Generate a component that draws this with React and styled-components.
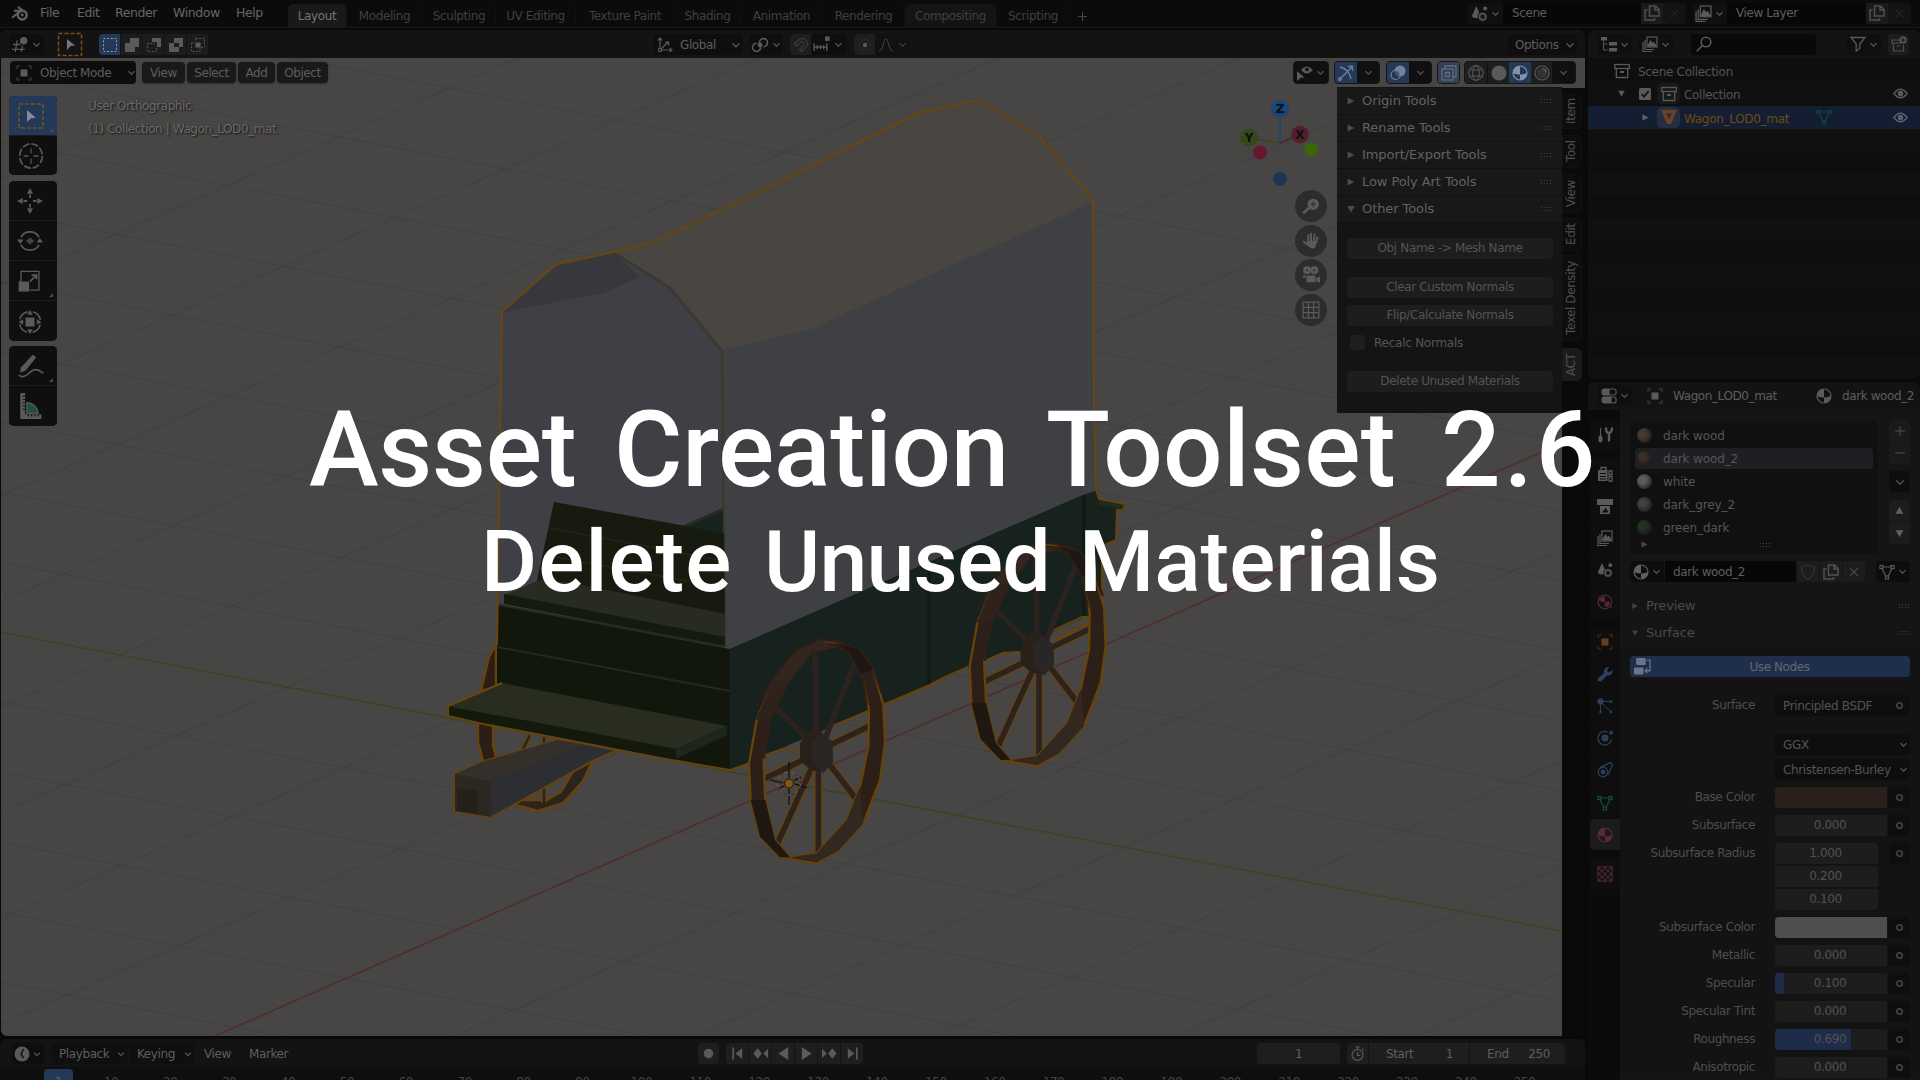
import React from "react";
import styled, { createGlobalStyle, css } from "styled-components";

const Global = createGlobalStyle`
  * { box-sizing: border-box; }
  body { margin: 0; background: #0a0a0a; overflow: hidden; }
`;

const C = {
  text: "#5e5e5e", icon: "#5a5a5a", bar: "#131313", btn: "#1e1e1e", blue: "#243858",
};

/* ---------- icons ---------- */
const chevron = <path d="M3.5 6l4.5 4.5L12.5 6" fill="none" stroke="currentColor" strokeWidth="1.7" />;
const shapes = {
  chevron,
  blender: <g fill="none" stroke="currentColor"><circle cx="10" cy="9.8" r="3.9" strokeWidth="2.2" /><circle cx="10" cy="9.8" r="1.3" fill="currentColor" stroke="none" /><path d="M1 12.2L8.4 6H2.6M6.2 2.5l5 3.8" strokeWidth="1.9" /></g>,
  grid3d: <g fill="none" stroke="currentColor"><path d="M1 8h7M0 12.5h12M5 4L3 15M10 9L8.5 15" strokeWidth="1.2" /><circle cx="11" cy="4.5" r="3.5" fill="currentColor" stroke="none" /></g>,
  selNew: <rect x="1.5" y="1.5" width="13" height="13" fill="none" stroke="#8a9ab4" strokeDasharray="2 1.7" />,
  selAdd: <path d="M6 1h9v9h-4v5H1V6h5z" fill="currentColor" />,
  selSub: <g><path d="M6 1h9v9h-4V5H6z" fill="currentColor" /><path d="M1.5 6v8.500h9V11M1.500 6.500H9" fill="none" stroke="currentColor" strokeDasharray="1.700 1.500" /></g>,
  selDiff: <path fillRule="evenodd" d="M6 1h9v9h-4v5H1V6h5zM6 6v4h5V6z" fill="currentColor" />,
  selAnd: <g><rect x="5.500" y="5.500" width="5" height="5" fill="currentColor" /><path d="M1.500 6v8.500H10V11M6 1.500h8.500V10M6 1.500V5M1.500 6H5M11 10.500h3" fill="none" stroke="currentColor" strokeDasharray="1.700 1.500" /></g>,
  axes: <g fill="none" stroke="currentColor" strokeWidth="1.200"><path d="M3 1v12h12M3 13l8-8M1 3.500L3 1l2 2.500M12.500 11l2.500 2-2.500 2M8 5h3.500v3.500" /><circle cx="3" cy="13" r="1.700" fill="#131313" /></g>,
  pivot: <g fill="none" stroke="currentColor" strokeWidth="1.400"><path d="M7.500 6A3.600 3.600 0 1 1 11 9.500M8.500 10A3.600 3.600 0 1 1 5 6.500" /><circle cx="8" cy="8" r="1.500" fill="currentColor" /></g>,
  magnet: <path d="M1.500 6.500L6.500 2.500a5 5 0 0 1 6.500 7.500l-4.500 4.500-2-2 4.300-4.500a2.200 2.200 0 0 0-3-3L3.500 9z" fill="none" stroke="currentColor" strokeWidth="1.200" />,
  increment: <g fill="none" stroke="currentColor" strokeWidth="1.300"><path d="M1 7v7M4 8.500v4M7 8.500v4M10 8.500v4M13 7v7M1 10.500h12" /><rect x="12" y="1" width="3" height="3" fill="currentColor" /></g>,
  prop: <g><circle cx="8" cy="8" r="5.500" fill="none" stroke="#2c2c2c" strokeWidth="1" /><circle cx="8" cy="8" r="2.200" fill="currentColor" /></g>,
  bell: <path d="M1 14c5 0 4-12 7-12s2 12 7 12" fill="none" stroke="currentColor" strokeWidth="1.200" />,
  objMode: <g><rect x="4.500" y="4.500" width="7" height="7" fill="currentColor" /><path d="M1 4V1h3M12 1h3v3M15 12v3h-3M4 15H1v-3" fill="none" stroke="currentColor" strokeWidth="1" opacity=".7" /></g>,
  scene: <g fill="currentColor"><path d="M5 1l4.200 9.500a4.500 3 0 0 1-8.400 0z" /><circle cx="13.300" cy="3.200" r="1.900" /><circle cx="11" cy="11" r="4.300" stroke="#131313" /><circle cx="11" cy="11" r="2.300" fill="#1a1a1a" /></g>,
  layers: <g fill="none" stroke="currentColor" strokeWidth="1.200"><rect x="5" y="1" width="10" height="10" /><path d="M3 4v9.500h9M1 6v9.500h9" /><path d="M6 10l2.500-5 2 3 1.200-1.500L14 10z" fill="currentColor" /></g>,
  copy: <g fill="none" stroke="currentColor" strokeWidth="1.500"><path d="M5.500 1h6L15 4.500V11H5.500zM11 1v4h4" /><path d="M3.500 5H1v10h9.500v-2" /></g>,
  x: <path d="M3.500 3.500l9 9M12.500 3.500l-9 9" stroke="currentColor" strokeWidth="1.200" />,
  tree: <g fill="currentColor"><rect x="0" y="1" width="6" height="3.500" /><rect x="8" y="6" width="8" height="3.500" /><rect x="8" y="12" width="8" height="3.500" /><path d="M2.500 5v9h4M2.500 8h4" fill="none" stroke="currentColor" /></g>,
  search: <g fill="none" stroke="currentColor" strokeWidth="1.600"><circle cx="10" cy="6" r="4.800" /><path d="M6.500 9.500L.8 15.200" /></g>,
  filter: <path d="M1 1.500h14L9.800 8v4.500L6.200 15V8z" fill="none" stroke="currentColor" strokeWidth="1.300" />,
  box: <g fill="none" stroke="currentColor" strokeWidth="1.300"><rect x=".8" y="1.500" width="14.400" height="4" /><path d="M2.300 5.500v9h11.400v-9" /><path d="M6 9h4" strokeWidth="2" /></g>,
  boxPlus: <g fill="none" stroke="currentColor" strokeWidth="1.200"><path d="M8 4H1v3h9M2.500 7v8h10V9M6 10h3" /><circle cx="12" cy="4" r="3.800" fill="currentColor" stroke="none" /><path d="M12 2v4M10 4h4" stroke="#1c1c1c" /></g>,
  eye: <g fill="none" stroke="currentColor" strokeWidth="1.600"><path d="M1 8q7-9 14 0-7 9-14 0z" /><circle cx="8" cy="8" r="2.200" fill="currentColor" /></g>,
  mesh: <g fill="none" stroke="currentColor" strokeWidth="1.200"><path d="M3.500 3h9M3 4.500l4 8M13 4.500l-4 8" /><rect x="1" y="1.500" width="3" height="3" /><rect x="12" y="1.500" width="3" height="3" /><rect x="6.500" y="12" width="3" height="3" /></g>,
  meshObj: <path fillRule="evenodd" d="M0 1h16L10 15H6zM5 4.500l3 6 3-6z" fill="currentColor" />,
  check: <g><rect width="16" height="16" rx="2" fill="currentColor" /><path d="M3.500 8l3.200 3.500L13 4" fill="none" stroke="#111" strokeWidth="2.200" /></g>,
  props: <g fill="none" stroke="currentColor" strokeWidth="1.200"><rect x="1" y="1" width="14" height="6" rx="2" /><rect x="1" y="9" width="14" height="6" rx="2" /><path d="M2 1.500h6v5H2zM2 9.500h8v5H2z" fill="currentColor" /></g>,
  material: <g><circle cx="8" cy="8" r="7" fill="none" stroke="currentColor" strokeWidth="1.200" /><path d="M8 1a7 7 0 0 0-7 7c2 1.300 4.500 1.600 7 1.400zM8 9.400V15c4 0 6.800-3 7-7-2 1-4.500 1.500-7 1.400z" fill="currentColor" /></g>,
  tool: <g fill="none" stroke="currentColor"><path d="M3.500 1v8" strokeWidth="1.200" /><path d="M3.500 10.500v3" strokeWidth="4" strokeLinecap="round" /><path d="M9 1.500c0 3 .8 4 2.500 4.500S15 4.500 15 1.500M12 6v7.500" strokeWidth="2.400" strokeLinecap="round" /></g>,
  render: <g fill="currentColor"><path fillRule="evenodd" d="M1 4h9.500v11H1zM3 7v1h6V7zm0 3v1h6v-1zm0 2.500v1h6v-1z" /><path d="M4 4V1.500h5V4M12 5h3v3.500h-3zM12 10.500h3V15h-3z" fill="none" stroke="currentColor" strokeWidth="1.300" /></g>,
  output: <g fill="currentColor"><path d="M0 1h16v6H0z" /><path fillRule="evenodd" d="M3 8h10v8H3zm1.500 6.500h7L9 10z" /></g>,
  world: <g><circle cx="8" cy="8" r="6.800" fill="none" stroke="currentColor" strokeWidth="1.200" /><path d="M2 5c3-3 5-3 6-2s-1 2 0 3-1 3-3 2-3-1-3-3zM9 8c2-1 4-1 4 1s-2 4-4 4-2-4 0-5z" fill="currentColor" /><path d="M1 2l2 2M15 14l-2-2" stroke="currentColor" /></g>,
  wrench: <path d="M1 15l-.5-2.500L7 7c-.5-3 1-6 5-6L10 4.500 12 6.500 15.500 4c.5 4-2.500 6-5.500 5.500L4 15.500z" fill="currentColor" />,
  particles: <g stroke="currentColor" fill="currentColor"><circle cx="3.500" cy="3.500" r="2.800" /><path d="M4 4l9 9M4 3.500h9M3.500 4v9" fill="none" /><circle cx="14" cy="3.500" r="1" /><circle cx="3.500" cy="14" r="1" /><circle cx="14" cy="14" r="1" /></g>,
  physics: <g fill="none" stroke="currentColor" strokeWidth="1.300"><path d="M10.500 2A6.800 6.800 0 1 0 14.500 9" /><circle cx="8" cy="8" r="2.800" fill="currentColor" /><circle cx="14" cy="2.800" r="1.300" fill="currentColor" /></g>,
  constraint: <g fill="none" stroke="currentColor" strokeWidth="1.400"><path d="M3 5.500L12 1.200a2 2 0 0 1 3 2.500L11 13" /><circle cx="6" cy="10" r="4.700" /><circle cx="6" cy="10" r="1.700" fill="currentColor" /></g>,
  checker: <g fill="currentColor"><rect x=".7" y=".7" width="14.600" height="14.600" fill="none" stroke="currentColor" />{[0, 1, 2, 3, 4].flatMap((r) => [0, 1, 2, 3, 4].filter((c) => (r + c) % 2 === 0).map((c) => <rect key={r + "-" + c} x={.5 + c * 3} y={.5 + r * 3} width="3" height="3" />))}</g>,
  shield: <path d="M8 1l6.500 2c0 6-2 10-6.500 12.500C3.500 13 1.500 9 1.500 3z" fill="none" stroke="currentColor" strokeWidth="1.300" />,
  nodes: <g fill="currentColor"><rect x="2" y="0" width="9" height="6.500" rx="1" /><rect x="0" y="9" width="9" height="6.500" rx="1" /><path d="M12 2h3v10h-4M12.500 9.800L10.500 12l2 2.200" fill="none" stroke="currentColor" strokeWidth="1.200" /></g>,
  dot: <circle cx="8" cy="8" r="3" fill="none" stroke="currentColor" strokeWidth="1.700" />,
  plus: <path d="M8 2.500v11M2.500 8h11" stroke="currentColor" strokeWidth="1.200" />,
  minus: <path d="M2.500 8h11" stroke="currentColor" strokeWidth="1.200" />,
  up: <path d="M8 3.500L12.800 12H3.200z" fill="currentColor" />,
  down: <path d="M8 12.500L3.200 4h9.600z" fill="currentColor" />,
  right: <path d="M3.500 3.200L12.500 8l-9 4.800z" fill="currentColor" />,
  clock: <g><circle cx="8" cy="8" r="7.500" fill="currentColor" /><path d="M9.500 3L7 8l2.500 4" fill="none" stroke="#141414" strokeWidth="1.600" /></g>,
  rec: <circle cx="8" cy="8" r="4.500" fill="currentColor" />,
  first: <path d="M2.500 1.500h1.800v13H2.500zM13 2.500v11L6 8z" fill="currentColor" />,
  prevKey: <path d="M5 2.500L9.500 8 5 13.500.5 8zM16 3v10l-5-5z" fill="currentColor" />,
  playBack: <path d="M13 1v14L2.500 8z" fill="currentColor" />,
  play: <path d="M3 1v14l10.500-7z" fill="currentColor" />,
  nextKey: <path d="M11 2.500L15.500 8 11 13.500 6.500 8zM0 3v10l5-5z" fill="currentColor" />,
  last: <path d="M13.500 1.500h-1.800v13h1.800zM3 2.500v11L10 8z" fill="currentColor" />,
  stopwatch: <g fill="none" stroke="currentColor" strokeWidth="1.300"><circle cx="8" cy="9.500" r="5.800" /><path d="M8 6v4h3M6 1h4M8 1v2.500M13 3l1.500 1.500" /></g>,
  eyeArrow: <g><path d="M4 5q5.500-7 12 0-6.500 7-12 0z" fill="currentColor" /><circle cx="10" cy="4.500" r="1.800" fill="#111" /><path d="M0 6l7.500 6.500-4 .3L0 16z" fill="currentColor" /></g>,
  gizmo: <g fill="none" stroke="currentColor" strokeWidth="1.300"><path d="M2 2q9 2 11 12M2 14L14 2M10 1.500h4.500V6" /><circle cx="2" cy="14" r="1.300" /></g>,
  overlay: <g><circle cx="10" cy="6" r="5.500" fill="currentColor" /><circle cx="5.500" cy="10" r="4.500" fill="#20355a" fillOpacity=".6" stroke="currentColor" strokeWidth="1.200" /></g>,
  xray: <g fill="none" stroke="currentColor" strokeWidth="1.300"><rect x="1" y="4" width="11" height="11" /><path d="M4 4V1h11v11h-3M4.500 7.500v4h4v-4z" /></g>,
  wire: <g fill="none" stroke="currentColor"><circle cx="8" cy="8" r="7.300" /><ellipse cx="8" cy="8" rx="3.300" ry="7.300" /><path d="M1.500 5h13M1.500 11h13" /></g>,
  solid: <circle cx="8" cy="8" r="7.500" fill="currentColor" />,
  rendered: <g><circle cx="8" cy="8" r="7" fill="none" stroke="currentColor" strokeWidth="1.200" /><circle cx="8" cy="8" r="5.200" fill="#333" /><path d="M9 3.500a4.500 4.500 0 0 1 3.300 4" fill="none" stroke="#777" /></g>,
  ring: <g fill="none" stroke="#5d5555" strokeWidth="1"><circle cx="8" cy="8" r="6.500" strokeDasharray="4 1.100" /><path d="M8 3.800v2.800M8 9.400v2.800M3.800 8h2.800M9.400 8h2.800" strokeWidth=".7" /></g>,
  move: <g fill="currentColor"><path d="M8 0l1.900 3.500H6.100zM8 16l1.900-3.500H6.100zM0 8l3.500-1.900v3.800zM16 8l-3.500-1.900v3.800z" /><path d="M8 4v2.200M8 9.800V12M4 8h2.200M9.800 8H12" stroke="currentColor" strokeWidth="1.100" /></g>,
  rotate: <g fill="none" stroke="currentColor" strokeWidth="1.100"><path d="M2.500 5.500a6 6 0 0 1 11 0M13.500 10.500a6 6 0 0 1-11 0" /><path d="M0 7h4l-2 3zM12 9h4l-2-3z" fill="currentColor" stroke="none" /><path d="M8 5.500L10.500 8 8 10.500 5.500 8z" fill="currentColor" stroke="none" opacity=".7" /></g>,
  scale: <g fill="none" stroke="currentColor" strokeWidth="1"><path d="M2.500 9V1h11v13H8" strokeWidth=".8" /><rect x="1.500" y="8.500" width="5.500" height="6" fill="currentColor" /><path d="M8 8l3.500-4M9 3.500h3v3" strokeWidth="1.200" /></g>,
  transform: <g fill="currentColor"><rect x="5.200" y="5.200" width="5.600" height="5.600" /><circle cx="8" cy="8" r="6.500" fill="none" stroke="currentColor" strokeDasharray="7 3.200" strokeDashoffset="-1.600" /><path d="M8 .5l1.700 3H6.300zM8 15.500l1.700-3H6.300zM1 8l2.800-1.700v3.400zM15 8l-2.800-1.700v3.400z" /></g>,
  pen: <g><path d="M9 .5l2 1.500L5 10.500 1.800 12l.4-3.300z" fill="currentColor" /><path d="M1 13.500c4 3.500 6-3.500 9.500-3.500 2.500 0 3 1 4.500 2.500" fill="none" stroke="currentColor" strokeWidth="1" /></g>,
  measure: <g><path d="M2 0h3v13h10v3H2z" fill="currentColor" /><path d="M6 6a7 7 0 0 1 7 6.500H6z" fill="#2d4a3e" stroke="#3e5f52" strokeWidth=".8" /><path d="M5 2H3.500M5 4H3.500M5 6H3.500M5 8H3.500M5 10H3.500M7 13v1.500M9 13v1.500M11 13v1.500M13 13v1.500" stroke="#111" strokeWidth=".7" /></g>,
  zoomIn: <g><circle cx="10" cy="6.500" r="5" fill="currentColor" /><path d="M6.500 9.500L1 14.500" stroke="currentColor" strokeWidth="2.400" /><path d="M10 4v5M7.500 6.500h5" stroke="#333" strokeWidth="1.100" /></g>,
  hand: <g fill="none" stroke="currentColor" strokeLinecap="round"><path d="M5.500 8V3M8 7.500V1.500M10.500 8l.7-5.500M12.500 9.500l1.300-4.500M4.500 11L1.500 8.500" strokeWidth="1.800" /><path d="M4.600 8h8.500l-1.500 6.500H7.500L4 11z" fill="currentColor" stroke="none" /></g>,
  camera: <g fill="currentColor"><circle cx="4.500" cy="3.800" r="3.500" /><circle cx="11" cy="3.800" r="3.500" /><circle cx="4.500" cy="3.800" r="1" fill="#2d2c2b" /><circle cx="11" cy="3.800" r="1" fill="#2d2c2b" /><path d="M4 8.500h8v6H4zM12.500 11l3.500-2v6l-3.500-2zM1 8.500h2.500v2H1z" /></g>,
  gridNav: <g fill="none" stroke="currentColor" strokeWidth="1.100"><rect x="1" y="1" width="14" height="14" /><path d="M5.700 1v14M10.300 1v14M1 5.700h14M1 10.300h14" /></g>,
};
shapes.objTab = shapes.objMode;

const Svg = styled.svg`display: block; flex: none; overflow: visible; color: ${(p) => p.$c};`;
const Icon = ({ n, s = 16, h, c = C.icon }) => (
  <Svg viewBox="0 0 16 16" width={s} height={h || s} $c={c} preserveAspectRatio="none">{shapes[n]}</Svg>
);

/* ---------- shared parts ---------- */
const font = css`
  font-family: "DejaVu Sans", "Liberation Sans", sans-serif;
  font-size: 12px; letter-spacing: -0.4px; line-height: 16px; white-space: pre;
`;
const Screen = styled.div`
  ${font} position: relative; width: 1920px; height: 1080px; overflow: hidden;
  background: #090909; color: ${C.text}; display: flex; flex-direction: column;
`;
const Row = styled.div`display: flex; align-items: center; flex: none;`;
const Cell = styled.div`
  display: flex; align-items: center; flex: none;
  justify-content: ${(p) => p.$j || "center"};
  width: ${(p) => (p.$w ? p.$w + "px" : "auto")};
  height: ${(p) => p.$h || 21}px;
  margin-left: ${(p) => p.$ml || 0}px;
  padding: ${(p) => p.$p || "0"};
  gap: ${(p) => p.$gap || 0}px;
  background: ${(p) => p.$bg || "transparent"};
  color: ${(p) => p.$c || C.text};
  border-radius: ${(p) => p.$r ?? "4px"};
`;
const Spacer = styled.div`flex: 1;`;

/* ---------- top bar ---------- */
const TopBar = styled(Row)`height: 28px; padding-left: 11px; border-bottom: 1px solid #191919; align-items: flex-start; background: #0b0b0b;`;
const MenuItem = styled.div`width: ${(p) => p.$w}px; padding-top: 5px; letter-spacing: -0.4px; font-size: 12.5px; color: #666;`;
const Workspace = styled.div`
  width: ${(p) => p.$w}px; height: 24px; margin-top: 4px; padding-top: 4px; text-align: center;
  border-radius: 5px 5px 0 0; color: ${(p) => (p.$on ? "#747474" : "#404040")};
  background: ${(p) => (p.$on ? "#191919" : p.$hover ? "#141414" : "transparent")};
  border-right: 1px solid #0f0f0f; letter-spacing: -0.4px;
`;
const workspaces = [["Layout", 59, 1], ["Modeling", 76], ["Sculpting", 73], ["UV Editing", 80], ["Texture Paint", 99], ["Shading", 66], ["Animation", 82], ["Rendering", 82], ["Compositing", 92, 0, 1], ["Scripting", 73]];

const DataPicker = ({ icon, label, w, ml, iw }) => (
  <Cell $ml={ml} $r="4px">
    <Cell $w={iw} $bg="#101010" $gap={2} $r="4px 0 0 4px"><Icon n={icon} s={17} /><Icon n="chevron" s={11} /></Cell>
    <Cell $w={w} $bg="#070707" $j="flex-start" $p="0 0 0 9px" $r="0">{label}</Cell>
    <Cell $w={22} $bg="#1a1a1a" $r="0"><Icon n="copy" s={16} c="#505050" /></Cell>
    <Cell $w={23} $bg="#131313" $r="0 4px 4px 0"><Icon n="x" s={13} c="#2c2c2c" /></Cell>
  </Cell>
);
const PickerRow = styled(Row)`height: 26px;`;

/* ---------- areas ---------- */
const Body = styled.div`display: flex; flex: 1; min-height: 0; padding-top: 2px;`;
const LeftCol = styled.div`width: 1585px; flex: none; display: flex; flex-direction: column;`;
const RightCol = styled.div`width: 332px; flex: none; margin-left: 3px; display: flex; flex-direction: column;`;
const Header = styled(Row)`height: 28px; background: ${C.bar}; border-radius: 6px 6px 0 0; padding: ${(p) => p.$pt ?? 1}px 0 ${(p) => p.$pb || 0}px ${(p) => p.$pl || 0}px;`;

/* ---------- viewport ---------- */
const Viewport = styled.div`
  height: 978px; flex: none; margin-left: 1px; position: relative; overflow: hidden;
  background: #474644; display: flex; flex-direction: column; border-radius: 0 0 0 6px;
`;
const SceneSvg = styled.svg`position: absolute; left: -1px; top: 0;`;
const VHeader = styled(Row)`position: relative; height: 30px; padding: 0 9px 1px;`;
const HBtn = styled(Cell)`background: #191919; border-radius: 4px; height: 21px; margin-right: 2px; box-shadow: 0 1px 2px #0005;`;
const HGroup = styled(Row)`height: 23px; margin-left: ${(p) => p.$ml || 0}px; border-radius: 4px; overflow: hidden; background: #101010; border: 1px solid #151515;`;
const VBody = styled.div`position: relative; flex: 1; display: flex; min-height: 0;`;
const Toolbar = styled.div`margin: 8px 0 0 8px; width: 48px; display: flex; flex-direction: column; gap: 5.500px;`;
const ToolGroup = styled.div`border-radius: 5px; overflow: hidden; background: #0e0e0e; display: flex; flex-direction: column; gap: 1px;`;
const Tool = styled.div`
  height: 39.200px; background: ${(p) => (p.$on ? C.blue : "#0f0f0f")}; box-shadow: 0 1px 0 #1c1c1c;
  display: flex; align-items: center; padding: 1px 0 0 8px; position: relative;
`;
const Corner = styled.i`position: absolute; right: 4px; bottom: 3px; border-left: 4px solid transparent; border-bottom: 4px solid #4a4a4a;`;
const Stats = styled.div`margin: 7px 0 0 31px; line-height: 23px; color: #6a6a6a; text-shadow: 1px 1px 2px #000c; letter-spacing: -0.42px;`;
const Nav = styled.div`width: 101px;`;
const NavBtns = styled.div`display: flex; flex-direction: column; gap: 2.700px; align-items: flex-end; padding-right: 10px;`;
const NavBtn = styled.div`width: 32px; height: 32px; border-radius: 50%; background: #2d2c2b; display: grid; place-items: center;`;
const NPanel = styled.div`width: 225px; height: 326px; margin-top: -1px; padding-top: 1px; background: #141414; display: flex; flex-direction: column;`;
const PanelHead = styled(Row)`
  height: 27px; padding: 0 10px 0 8px; font-size: 13px; letter-spacing: -0.08px; color: #626262; background: #181818;
  border-bottom: 1px solid #111;
`;
const PanelTitle = styled.span`margin-left: 5px; flex: 1;`;
const Grip = styled.i`width: 12px; height: 6px; background: radial-gradient(circle, #444 0.800px, transparent 1px) 0 0 / 3px 3px;`;
const OpBtn = styled.div`
  height: 21px; margin: ${(p) => p.$mt}px 9px 0 10px; border-radius: 4px; background: #1d1d1d; color: #545454;
  text-align: center; line-height: 21px; letter-spacing: -0.35px;
`;
const CheckRow = styled(Row)`height: 21px; margin: 6px 13px 0; color: #565656; gap: 9px; letter-spacing: -0.25px;`;
const Box = styled.i`width: 15px; height: 15px; border-radius: 3px; background: #1f1f1f;`;
const SideTabs = styled.div`width: 23px; background: #0a0a0a; padding-top: 6px;`;
const SideTab = styled.div`
  width: 20px; height: ${(p) => p.$h}px; margin-bottom: ${(p) => p.$mb}px; border-radius: 5px 0 0 5px;
  background: ${(p) => (p.$on ? "#1b1b1b" : "#0d0d0d")}; border: 1px solid ${(p) => (p.$on ? "#1b1b1b" : "#121212")};
  writing-mode: vertical-rl; transform: rotate(180deg); text-align: center; line-height: 17px; color: #505050;
`;

const Wheel = ({ dx = 0, dy = 0 }) => (
  <g transform={`translate(${720 + dx} ${460 + dy}) scale(.33333)`}>
    <g stroke="#67430b" strokeWidth="25" strokeLinecap="round">
      <path d="M300 870L465 790M270 890L135 955M270 935L175 1145M295 930V1180M330 915L418 1030" />
    </g>
    <g stroke="#2c2321" strokeWidth="17" strokeLinecap="round">
      <path d="M289 860L285 585M310 850L408 600M300 870L465 790M275 850L175 750M270 890L135 955M270 935L175 1145M295 930V1180M330 915L418 1030" />
    </g>
    <path fillRule="evenodd" fill="#2b1f18" stroke="#67430b" strokeWidth="7" strokeLinejoin="round"
      d="M300 542L225 578 160 660 110 780 87 910 92 1020 120 1130 180 1192 290 1210 355 1172 430 1090 480 960 495 850 490 735 460 630 415 570 350 548zM345 560L385 570 425 640 447 750 445 860 420 980 380 1080 290 1180 210 1192 165 1140 136 1020 130 890 150 780 205 665 275 575z" />
    <path d="M136 890L130 890 150 780 205 665 275 575 345 560 385 570 425 640 440 735" fill="none" stroke="#2b1f18" strokeWidth="9" />
    <path d="M110 740L160 655 225 573 300 538 350 544 415 566 460 626 486 700" fill="none" stroke="#2b1f18" strokeWidth="8" />
    <path d="M300 540L225 576 158 660 205 667 275 578 345 562z" fill="#33261f" />
    <path d="M108 780L158 660 205 667 150 780z" fill="#2e221b" />
    <path d="M120 1130L180 1192 210 1192 165 1140 136 1020 92 1020z" fill="#1f1712" />
    <path d="M355 1172L430 1090 420 980 380 1080 290 1180 210 1192 290 1207z" fill="#33281f" />
    <path d="M345 548L415 568 460 630 425 642 385 572z" fill="#1f1613" />
    <path d="M265 812L300 808 320 840 300 935 270 930 240 900 240 850z" fill="#2a201a" />
    <path d="M305 820L338 845 340 905 310 940 280 910 275 850z" fill="#2b2626" />
  </g>
);

const gridLines = [];
for (let k = -9; k <= 7; k++) if (k) {
  const y = 696 + 70 * k;
  gridLines.push(["a" + k, 0, y - 64, 1562, y + 235]);
}
for (let k = -9; k <= 7; k++) if (k) {
  const y = 983 + 105.600 * k;
  gridLines.push(["b" + k, 0, y + 147, 1562, y - 539]);
}

const Scene = () => (
  <SceneSvg width="1585" height="978" viewBox="0 58 1585 978">
    <g stroke="#424044" strokeWidth="1.200">
      {gridLines.map(([k, a, b, c, d]) => <line key={k} x1={a} y1={b} x2={c} y2={d} />)}
    </g>
    <path d="M0 632L1562 931" stroke="#3a4420" strokeWidth="1.500" />
    <path d="M215 1036L1161 620 1562 443" stroke="#542a35" strokeWidth="1.600" fill="none" />
    {/* far wheel and tongue */}
    <g stroke="#67430b" strokeWidth="2.400" strokeLinejoin="round">
      <path d="M496 645l-7 12-8 33 6 0 9-1zM478 720v22l6 22 14 1-5-20v-25z" fill="#2a1e17" />
      <path d="M516 805l22 6 25-8 20-22 11-23-20 12-13 22-14 8-28 0z" fill="#2b231d" />
      <path d="M544 735v68M530 735l-12 24" strokeWidth="5" />
      <path d="M544 735v68M530 735l-12 24" strokeWidth="2.500" stroke="#2c211d" />
      <path d="M455 774l27-12 75-22 60 10-23 10-103 57-37-6z" fill="#2d2a26" />
    </g>
    <path d="M455 774l27-12 75-22 30 4-96 38z" fill="#33302b" />
    <path d="M491 782l94-38 30 6-23 10-100 56z" fill="#2d2d34" />
    <path d="M455 774l36 8v35l-36-6z" fill="#2b2822" />
    <path d="M457 788l21 2v24l-21-3z" fill="#24211c" />
    {/* canvas cover */}
    <path d="M502 311l54-47 58-12 56 35 52 63 3 300-228-45z" fill="#3f4045" />
    <path d="M504 312l53-46 57-13 26 24-36 16z" fill="#37383b" />
    <path d="M614 252l41-10 265-129.500 59-12.500 60 36 54 64-245 112-36 17-90 21-52-63z" fill="#494641" />
    <path d="M722 350l90-21 36-17 245-110 1 200 3 92-366 155-8-3z" fill="#3f4044" />
    <path d="M614 253l56 35 52 63 3 296" fill="none" stroke="#3a3932" strokeWidth="3" />
    {/* side box */}
    <path d="M730 649L1083 495l14-5 2 9 26 5-2 5-6 1v30l-14 6v30l-8 41-10 0-32 15-30 20-20 1-16 6-44 19-14 6-46 21-15 0-55 22-32 15-26 15-18 3z" fill="#18221d" />
    <path d="M730 649L1083 495v120l-153 70-200 85z" fill="#17211d" />
    <path d="M929 566v120M1084 495v122" stroke="#0f1a11" strokeWidth="3" />
    <path d="M1099 499l26 5-2 5-24-4z" fill="#1d2b20" />
    {/* bench and front box */}
    <path d="M682 526l41-18v25z" fill="#17231f" /><path d="M682 526l41-18v3l-37 16z" fill="#262d20" />
    <path d="M554 502l170 31 1 82-190-25z" fill="#171b0f" />
    <path d="M549 528l175 33M545 555l180 33" stroke="#212618" strokeWidth="1.500" />
    <path d="M540 580l33 3 152 31v24l-221-43z" fill="#282c20" />
    <path d="M504 594l221 43v9l-221-42z" fill="#141a0d" />
    <path d="M497 605l233 44v121l-233-45z" fill="#12170b" />
    <path d="M499 605l226 41.500M497 647l233 44" stroke="#242a1d" strokeWidth="2" />
    <path d="M448 706l54-23 225 43-51 23z" fill="#292d20" />
    <path d="M448 706l228 43v11l-228-44z" fill="#131a0c" />
    <path d="M676 749l51-23v9l-51 24z" fill="#1d261d" />
    <path d="M1096 490l3 9 26 5-2 6-6 0-1 30-14 6v55M883 705l47-20 13-7 25-11M987 660l16-7 17-1M830 727l53-22M765 755l18-6 20 0M1050 632l32-15h8v5l-36 18M730 770l18-6M448 716l30 7 30 6 150 29 72 12" fill="none" stroke="#67430b" strokeWidth="2" />
    <path d="M448 717v-11l54-23M497 645l5-334 54-47 58-12 41-10 265-129.500 59-12.500 60 36 54 64 1 200 2 90" fill="none" stroke="#694610" strokeWidth="2" strokeLinejoin="round" />
    <Wheel dx={220.700} dy={-97.300} />
    <Wheel />
    {/* 3D cursor */}
    <g fill="none">
      <path d="M789 762v16M789 789v16M770 780l13 3M795 784l12 4M780 788l4-2M794 780l7-3" stroke="#0c0c0c" strokeWidth="1.200" />
      <circle cx="789" cy="783.500" r="11.500" stroke="#6a6464" strokeDasharray="4 4" /><circle cx="789" cy="783.500" r="11.500" stroke="#5d1c20" strokeDasharray="4 4" strokeDashoffset="4" />
      <circle cx="789" cy="783.500" r="4.500" fill="#835610" stroke="#1b1306" />
    </g>
  </SceneSvg>
);

const GizmoSvg = styled.svg`display: block;`;
const AxisText = styled.text`font: 700 12px "DejaVu Sans", sans-serif; letter-spacing: 0; text-anchor: middle; fill: #0b0f14;`;
const Gizmo = () => (
  <GizmoSvg width="100" height="102" viewBox="1236 88 100 102">
    <path d="M1280 143v-34" stroke="#1c4774" strokeWidth="1.800" /><path d="M1280 143l20-9" stroke="#55222c" strokeWidth="1.800" /><path d="M1280 143l-31-5" stroke="#36481a" strokeWidth="1.800" />
    <circle cx="1280" cy="108.500" r="8.800" fill="#174678" /><circle cx="1300" cy="134.500" r="8.800" fill="#52202a" /><circle cx="1249" cy="137.500" r="8.800" fill="#354817" />
    <circle cx="1260" cy="152.500" r="7" fill="#66192c" /><circle cx="1311" cy="149.500" r="7" fill="#3e6409" /><circle cx="1280" cy="179" r="7" fill="#1c3654" />
    <AxisText x="1280" y="113">Z</AxisText><AxisText x="1300" y="139">X</AxisText><AxisText x="1249" y="142">Y</AxisText>
  </GizmoSvg>
);

/* ---------- timeline ---------- */
const Gap = styled.div`height: 3px; flex: none;`;
const Ruler = styled.div`height: 14px; background: #0e0e0e; display: flex; padding: 2px 0 0 23px; overflow: hidden;`;
const Tick = styled.span`
  width: 58.900px; flex: none; display: flex; justify-content: center; color: #454545; padding-top: 5px; overflow: visible;
`;
const Current = styled.span`width: 29px; height: 20px; margin: -5px 0 0 12px; padding-top: 5px; text-align: center; background: ${C.blue}; border-radius: 4px; color: #58657c;`;

/* ---------- outliner ---------- */
const Outliner = styled.div`height: 321px; flex: none; background: repeating-linear-gradient(#0e0e0e 0 23px, #101010 23px 46px); padding-top: 1px; border-radius: 0 0 6px 6px;`;
const ORow = styled(Row)`height: 23.300px; background: ${(p) => (p.$on ? "#141e32" : "transparent")}; padding-left: ${(p) => p.$pl}px; color: ${(p) => (p.$on ? "#6e4a12" : "#545454")};`;
const OIcon = styled.div`width: 23px; height: 21px; display: grid; place-items: center; border-radius: 5px; background: ${(p) => (p.$on ? "#262e44" : "#191919")}; margin: 0 4px 0 ${(p) => p.$ml}px;`;
const OText = styled.span`flex: ${(p) => (p.$w ? "none" : 1)}; width: ${(p) => p.$w || "auto"}; padding-top: 3px; letter-spacing: -0.3px;`;

/* ---------- properties ---------- */
const Props = styled.div`flex: 1; min-height: 0; display: flex;`;
const PTabs = styled.div`width: 32px; padding: 9px 0 0 2px; background: #0b0b0b; flex: none;`;
const PTab = styled.div`
  height: 31.200px; margin-top: ${(p) => p.$mt || 0.900}px; display: grid; place-items: center; border-radius: 5px 0 0 5px;
  background: ${(p) => (p.$on ? "#1b1b1b" : "#0e0e0e")};
`;
const PContent = styled.div`flex: 1; background: #151515; padding: 11px 10px 0 10px;`;
const List = styled.div`width: 248px; height: 133px; background: #101010; border-radius: 5px; padding: 4px 5px 0;`;
const LRow = styled(Row)`height: 21px; margin-bottom: 2px; border-radius: 4px; padding-left: 1px; gap: 11px; letter-spacing: -0.12px; color: #565656; background: ${(p) => (p.$on ? "#1e1f22" : "transparent")};`;
const Ball = styled.i`width: 15px; height: 15px; margin-left: 1px; border-radius: 50%; background: radial-gradient(circle at 38% 40%, ${(p) => p.$c} 25%, #0e0e0e 100%);`;
const LFoot = styled(Row)`height: 9px; padding-left: 4px;`;
const ListWrap = styled.div`display: flex; gap: 11px;`;
const BtnCol = styled.div`display: flex; flex-direction: column; margin-top: -1px; gap: 1px;`;
const IdRow = styled(Row)`margin-top: 7px; gap: 1px;`;
const SubHead = styled(Row)`height: 27px; font-size: 13px; letter-spacing: -0.15px; color: #4a4a4a;`;
const Surface = styled.div`background: #131313; margin: 1px -10px 0 -10px; padding: 9px 10px 0 10px;`;
const UseNodes = styled(Row)`height: 21px; border-radius: 4px; background: #1f2f4b; color: #626872; padding-left: 4px; margin-bottom: 18px;`;
const Field = styled.div`display: flex; align-items: flex-start; margin-bottom: ${(p) => p.$mb ?? 7}px;`;
const FLabel = styled.div`width: 125px; margin-right: 20px; text-align: right; line-height: 21px; color: #4e4e4e; flex: none;`;
const Value = styled.div`
  width: ${(p) => p.$w || 112}px; height: 21px; line-height: 21px; text-align: center; position: relative; padding-right: 2px;
  border-radius: ${(p) => p.$r || "4px 0 0 4px"}; background: ${(p) => p.$bg || "#1d1d1d"}; color: #525252; overflow: hidden;
`;
const Fill = styled.i`position: absolute; left: 0; top: 0; bottom: 0; width: ${(p) => p.$f}px; background: #1e2c49;`;
const Num = styled.span`position: relative;`;
const Stack = styled.div`display: flex; flex-direction: column; gap: 2px;`;
const DotBtn = () => <Cell $w={22} $ml={1} $bg="#0e0e0e" $r="0 4px 4px 0"><Icon n="dot" s={15} c="#454545" /></Cell>;
const Select = styled(Row)`width: 135px; height: 21px; padding: 0 1px 0 8px; background: #0e0e0e; border-radius: 4px; justify-content: space-between; color: #545454; letter-spacing: -0.35px;`;

const Slider = ({ label, value, fill = 0, bg }) => (
  <Field><FLabel>{label}</FLabel><Value $bg={bg}><Fill $f={fill} /><Num>{value}</Num></Value><DotBtn /></Field>
);

/* ---------- title ---------- */
const Titles = styled.div`position: absolute; inset: 0; pointer-events: none; color: #fff; font-family: Roboto, sans-serif; font-weight: 500;`;
const Line = styled.div`
  position: absolute; left: ${(p) => p.$x}px; top: ${(p) => p.$y}px; display: flex;
  font-size: ${(p) => p.$s}px; line-height: ${(p) => p.$s}px;
`;
const Word = styled.span`width: ${(p) => p.$w}px; letter-spacing: ${(p) => p.$ls}px;`;

const tabs = [["tool", C.icon, 0], ["render", C.icon, 7], ["output", C.icon], ["layers", C.icon], ["scene", C.icon], ["world", "#552632"], ["objTab", "#633f22", 9], ["wrench", "#2c4062"], ["particles", "#2b3d5a"], ["physics", "#303f58"], ["constraint", "#2b3d5a"], ["mesh", "#11503b"], ["material", "#562b34", 0, 1], ["checker", "#43252b", 8]];

export default function App() {
  return (
    <Screen>
      <Global />
      <TopBar>
        <Cell $w={29} $h={26} $j="flex-start"><Icon n="blender" s={18} c="#606060" /></Cell>
        {[["File", 37], ["Edit", 38], ["Render", 58], ["Window", 63], ["Help", 52]].map(([t, w]) => <MenuItem key={t} $w={w}>{t}</MenuItem>)}
        {workspaces.map(([t, w, on, hv]) => <Workspace key={t} $w={w} $on={on} $hover={hv}>{t}</Workspace>)}
        <Cell $w={24} $h={32}><Icon n="plus" s={13} c="#484848" /></Cell>
        <Spacer />
        <PickerRow>
          <DataPicker icon="scene" label="Scene" w={138} iw={35} ml={0} />
          <DataPicker icon="layers" label="View Layer" w={139} iw={34} ml={7} />
          <Cell $w={9} />
        </PickerRow>
      </TopBar>

      <Body>
        <LeftCol>
          <Header $pl={10}>
            <Cell $w={34} $bg="#0e0e0e" $gap={2}><Icon n="grid3d" s={17} /><Icon n="chevron" s={11} /></Cell>
            <Cell $ml={13} $w={26} $h={25}>
              <svg width="26" height="25" viewBox="0 0 26 25"><rect x="1.500" y="1.500" width="23" height="22" fill="none" stroke="#785010" strokeWidth="1.500" strokeDasharray="4 2" /><path d="M10 7l8 6.500-4.500.5L10 18z" fill="#777" /></svg>
            </Cell>
            <Cell $ml={16} $w={21} $bg={C.blue} $r="4px 0 0 4px"><Icon n="selNew" /></Cell>
            {["selAdd", "selSub", "selDiff", "selAnd"].map((n) => <Cell key={n} $ml={1} $w={21} $bg="#1c1c1c" $r="0"><Icon n={n} /></Cell>)}
            <Cell $ml={445} $w={89} $bg="#0e0e0e" $j="flex-start" $p="0 0 0 4px"><Icon n="axes" /><Cell $ml={7} $w={54} $j="flex-start">Global</Cell></Cell>
            <Cell $ml={-12} $w={12}><Icon n="chevron" s={12} /></Cell>
            <Cell $ml={7} $w={34} $bg="#0e0e0e" $gap={2}><Icon n="pivot" s={18} /><Icon n="chevron" s={11} /></Cell>
            <Cell $ml={7} $w={21} $bg="#1e1e1e" $r="4px 0 0 4px"><Icon n="magnet" c="#3c3c3c" /></Cell>
            <Cell $w={35} $bg="#0e0e0e" $gap={3}><Icon n="increment" s={17} /><Icon n="chevron" s={11} /></Cell>
            <Cell $ml={8} $w={21} $bg="#1e1e1e" $r="4px 0 0 4px"><Icon n="prop" /></Cell>
            <Cell $w={35} $bg="#111" $gap={3}><Icon n="bell" c="#3c3c3c" /><Icon n="chevron" s={11} c="#3c3c3c" /></Cell>
            <Spacer />
            <Cell $w={69} $bg="#0e0e0e" $j="space-between" $p="0 1px 0 7px">Options<Icon n="chevron" s={12} /></Cell><Cell $w={8} />
          </Header>

          <Viewport>
            <Scene />
            <VHeader>
              <Cell $w={126} $h={23} $bg="#0d0d0d" $j="flex-start" $p="0 2px 0 6px"><Icon n="objMode" s={16} /><Cell $ml={8} $w={86} $j="flex-start">Object Mode</Cell><Icon n="chevron" s={11} /></Cell>
              <HBtn $ml={6} $w={43}>View</HBtn><HBtn $w={49}>Select</HBtn><HBtn $w={37}>Add</HBtn><HBtn $w={51}>Object</HBtn>
              <Spacer />
              <HGroup><Cell $w={34} $gap={2}><Icon n="eyeArrow" /><Icon n="chevron" s={11} /></Cell></HGroup>
              <HGroup $ml={5}><Cell $w={22} $bg={C.blue} $r="0"><Icon n="gizmo" c="#74829c" /></Cell><Cell $w={22}><Icon n="chevron" s={11} /></Cell></HGroup>
              <HGroup $ml={6}><Cell $w={22} $bg={C.blue} $r="0"><Icon n="overlay" c="#74829c" /></Cell><Cell $w={22}><Icon n="chevron" s={11} /></Cell></HGroup>
              <HGroup $ml={5}><Cell $w={21} $bg="#354056" $r="0"><Icon n="xray" c="#5f6c84" /></Cell></HGroup>
              <HGroup $ml={4}>
                <Cell $w={22} $bg="#1e1e1e" $r="0"><Icon n="wire" /></Cell><Cell $ml={1} $w={21} $bg="#1e1e1e" $r="0"><Icon n="solid" /></Cell>
                <Cell $w={22} $bg={C.blue} $r="0"><Icon n="material" c="#8792a6" /></Cell><Cell $w={21} $bg="#1e1e1e" $r="0"><Icon n="rendered" /></Cell><Cell $w={23}><Icon n="chevron" s={11} /></Cell>
              </HGroup>
            </VHeader>
            <VBody>
              <Toolbar>
                <ToolGroup>
                  <Tool $on><svg width="28" height="28" viewBox="0 0 28 28"><rect x="2" y="2" width="24" height="24" fill="none" stroke="#74561c" strokeWidth="1.500" strokeDasharray="4 2" /><path d="M10 8l9 8-5 .3-4 3.700z" fill="#858c98" /></svg><Corner /></Tool>
                  <Tool><Icon n="ring" s={28} h={30} /></Tool>
                </ToolGroup>
                <ToolGroup>
                  <Tool><Icon n="move" s={26} /></Tool><Tool><Icon n="rotate" s={26} h={24} /></Tool>
                  <Tool><Icon n="scale" s={26} h={23} /><Corner /></Tool><Tool><Icon n="transform" s={26} /></Tool>
                </ToolGroup>
                <ToolGroup><Tool><Icon n="pen" s={28} h={25} /><Corner /></Tool><Tool><Icon n="measure" s={26} /></Tool></ToolGroup>
              </Toolbar>
              <Stats>{"User Orthographic\n(1) Collection | Wagon_LOD0_mat"}</Stats>
              <Spacer />
              <Nav>
                <Gizmo />
                <NavBtns>{["zoomIn", "hand", "camera", "gridNav"].map((n) => <NavBtn key={n}><Icon n={n} s={18} c="#5c5b5a" /></NavBtn>)}</NavBtns>
              </Nav>
              <NPanel>
                {["Origin Tools", "Rename Tools", "Import/Export Tools", "Low Poly Art Tools", "Other Tools"].map((t, i) => (
                  <PanelHead key={t}><Icon n={i === 4 ? "down" : "right"} s={12} c="#4c4c4c" /><PanelTitle>{t}</PanelTitle><Grip /></PanelHead>
                ))}
                <OpBtn $mt={15}>{"Obj Name -> Mesh Name"}</OpBtn>
                <OpBtn $mt={18}>Clear Custom Normals</OpBtn>
                <OpBtn $mt={7}>Flip/Calculate Normals</OpBtn>
                <CheckRow><Box />Recalc Normals</CheckRow>
                <OpBtn $mt={18}>Delete Unused Materials</OpBtn>
              </NPanel>
              <SideTabs>
                {[["Item", 35, 6], ["Tool", 33, 6], ["View", 39, 5], ["Edit", 33, 4], ["Texel Density", 86, 7], ["ACT", 33, 0]].map(([t, h, mb]) => <SideTab key={t} $h={h} $mb={mb} $on={t === "ACT"}>{t}</SideTab>)}
              </SideTabs>
            </VBody>
          </Viewport>

          <Gap />
          <Header $pl={12}>
            <Cell $w={32} $bg="#0e0e0e" $gap={2}><Icon n="clock" s={16} /><Icon n="chevron" s={10} /></Cell>
            <Cell $ml={8} $w={76} $bg="#0f0f0f" $j="space-between" $p="0 2px 0 7px" $r="4px 0 0 4px">Playback<Icon n="chevron" s={10} /></Cell>
            <Cell $ml={1} $w={66} $bg="#0f0f0f" $j="space-between" $p="0 2px 0 8px" $r="0 4px 4px 0">Keying<Icon n="chevron" s={10} /></Cell>
            <Cell $ml={9} $w={45} $j="flex-start">View</Cell><Cell $w={50} $j="flex-start">Marker</Cell>
            <Cell $ml={399} $w={21} $bg={C.btn}><Icon n="rec" s={17} /></Cell>
            <Cell $w={7} />
            {["first", "prevKey", "playBack", "play", "nextKey", "last"].map((n, i) => <Cell key={n} $ml={i ? 1 : 0} $w={22} $bg={C.btn} $r={i === 0 ? "4px 0 0 4px" : i === 5 ? "0 4px 4px 0" : "0"}><Icon n={n} s={15} /></Cell>)}
            <Spacer />
            <Cell $w={83} $bg={C.btn}>1</Cell>
            <Cell $ml={7} $w={21} $bg={C.btn} $r="4px 0 0 4px"><Icon n="stopwatch" s={15} /></Cell>
            <Cell $ml={1} $w={100} $bg={C.btn} $r="0" $j="space-between" $p="0 16px 0 17px"><span>Start</span><span>1</span></Cell>
            <Cell $ml={1} $w={95} $bg={C.btn} $r="0 4px 4px 0" $j="space-between" $p="0 15px 0 17px"><span>End</span><span>250</span></Cell>
            <Cell $w={20} />
          </Header>
          <Ruler>
            <Tick><Current>1</Current></Tick>
            {Array.from({ length: 25 }, (_, i) => <Tick key={i}>{(i + 1) * 10}</Tick>)}
          </Ruler>
        </LeftCol>

        <RightCol>
          <Header $pl={10} $pt={0}>
            <Cell $w={34} $bg="#0f0f0f" $gap={2}><Icon n="tree" /><Icon n="chevron" s={11} /></Cell>
            <Cell $ml={7} $w={34} $bg="#0f0f0f" $gap={2}><Icon n="layers" /><Icon n="chevron" s={11} /></Cell>
            <Cell $ml={18} $w={125} $bg="#090909" $j="flex-start" $p="0 5px"><Icon n="search" /></Cell>
            <Cell $ml={31} $w={34} $bg="#0f0f0f" $gap={2}><Icon n="filter" /><Icon n="chevron" s={11} /></Cell>
            <Cell $ml={7} $w={21} $bg="#1c1c1c"><Icon n="boxPlus" c="#505050" /></Cell>
          </Header>
          <Outliner>
            <ORow $pl={26}><Icon n="box" /><Cell $w={8} /><OText>Scene Collection</OText></ORow>
            <ORow $pl={28}><Icon n="down" s={11} /><Cell $w={12} /><Icon n="check" s={12} /><OIcon $ml={6}><Icon n="box" /></OIcon><OText>Collection</OText><Icon n="eye" s={15} c="#5a5a5a" /><Cell $w={12} /></ORow>
            <ORow $pl={52} $on><Icon n="right" s={11} c="#606060" /><OIcon $ml={6} $on><Icon n="meshObj" c="#6f4222" /></OIcon><OText $w="132px">Wagon_LOD0_mat</OText><Icon n="mesh" c="#0f4640" /><Spacer /><Icon n="eye" s={15} c="#5a606c" /><Cell $w={12} /></ORow>
          </Outliner>
          <Gap />
          <Header $pl={10} $pt={0} $pb={1}>
            <Cell $w={34} $bg="#0f0f0f" $gap={2}><Icon n="props" /><Icon n="chevron" s={11} /></Cell>
            <Cell $ml={15} $w={150} $j="flex-start" $gap={10}><Icon n="objMode" />Wagon_LOD0_mat</Cell>
            <Cell $ml={19} $j="flex-start" $gap={10}><Icon n="material" />dark wood_2</Cell>
          </Header>
          <Props>
            <PTabs>{tabs.map(([n, c, mt, on]) => <PTab key={n} $mt={mt} $on={on}><Icon n={n} c={c} /></PTab>)}</PTabs>
            <PContent>
              <ListWrap>
                <List>
                  {[["dark wood", "#453a32"], ["dark wood_2", "#3a2e29", 1], ["white", "#5c5c5c"], ["dark_grey_2", "#404040"], ["green_dark", "#233123"]].map(([t, c, on]) => <LRow key={t} $on={on}><Ball $c={c} />{t}</LRow>)}
                  <LFoot><Icon n="right" s={11} c="#454545" /><Cell $w={109} $h={8} /><Grip /></LFoot>
                </List>
                <BtnCol>
                  <Cell $w={21} $bg="#1a1a1a" $r="4px 4px 0 0"><Icon n="plus" s={14} c="#505050" /></Cell>
                  <Cell $w={21} $h={22} $bg="#1a1a1a" $r="0 0 4px 4px"><Icon n="minus" s={14} c="#505050" /></Cell>
                  <Cell $h={5} />
                  <Cell $w={21} $bg="#0d0d0d"><Icon n="chevron" s={14} c="#505050" /></Cell>
                  <Cell $h={6} />
                  <Cell $w={21} $bg="#1c1c1c" $r="4px 4px 0 0"><Icon n="up" s={13} c="#606060" /></Cell>
                  <Cell $w={21} $h={22} $bg="#1c1c1c" $r="0 0 4px 4px"><Icon n="down" s={13} c="#606060" /></Cell>
                </BtnCol>
              </ListWrap>
              <IdRow>
                <Cell $w={34} $bg="#0d0d0d" $gap={2} $r="4px 0 0 4px"><Icon n="material" c="#606060" /><Icon n="chevron" s={11} /></Cell>
                <Cell $w={131} $bg="#070707" $j="flex-start" $p="0 0 0 8px" $r="0">dark wood_2</Cell>
                <Cell $w={22} $bg="#1c1c1c" $r="0"><Icon n="shield" c="#343434" /></Cell>
                <Cell $w={22} $bg="#1c1c1c" $r="0"><Icon n="copy" c="#505050" /></Cell>
                <Cell $w={22} $bg="#1c1c1c" $r="0 4px 4px 0"><Icon n="x" s={14} c="#505050" /></Cell>
                <Cell $ml={10} $w={34} $bg="#0d0d0d" $gap={2}><Icon n="mesh" /><Icon n="chevron" s={11} /></Cell>
              </IdRow>
              <Cell $h={10} />
              <SubHead><Icon n="right" s={10} c="#404040" /><Cell $w={6} /><Spacer as="span">Preview</Spacer><Grip /></SubHead>
              <SubHead><Icon n="down" s={10} c="#404040" /><Cell $w={6} /><Spacer as="span">Surface</Spacer><Grip /></SubHead>
              <Surface>
                <UseNodes><Icon n="nodes" s={17} c="#6a7486" /><Spacer /><span>Use Nodes</span><Spacer /><Cell $w={2} /></UseNodes>
                <Field $mb={18}><FLabel>Surface</FLabel><Select>Principled BSDF<Cell $w={20}><Icon n="dot" s={15} c="#454545" /></Cell></Select></Field>
                <Field $mb={4}><FLabel /><Select>GGX<Icon n="chevron" s={11} /></Select></Field>
                <Field><FLabel /><Select>Christensen-Burley<Icon n="chevron" s={11} /></Select></Field>
                <Slider label="Base Color" bg="#2a201c" />
                <Slider label="Subsurface" value="0.000" />
                <Field><FLabel>Subsurface Radius</FLabel>
                  <Stack><Value $w={103} $r="4px 4px 0 0">1.000</Value><Value $w={103} $r="0">0.200</Value><Value $w={103} $r="0 0 4px 4px">0.100</Value></Stack>
                  <Cell $ml={11} $w={21} $bg="#0e0e0e"><Icon n="dot" s={15} c="#454545" /></Cell>
                </Field>
                <Slider label="Subsurface Color" bg="#4e4e4e" />
                <Slider label="Metallic" value="0.000" />
                <Slider label="Specular" value="0.100" fill={9} />
                <Slider label="Specular Tint" value="0.000" />
                <Slider label="Roughness" value="0.690" fill={76} />
                <Slider label="Anisotropic" value="0.000" />
              </Surface>
            </PContent>
          </Props>
        </RightCol>
      </Body>

      <Titles>
        <Line $x={309} $y={398} $s={105}><Word $w={305} $ls={-0.3}>Asset</Word><Word $w={432} $ls={-0.3}>Creation</Word><Word $w={395} $ls={0.3}>Toolset</Word><Word $w={170} $ls={3}>2.6</Word></Line>
        <Line $x={481} $y={519} $s={86}><Word $w={283} $ls={1.1}>Delete</Word><Word $w={315} $ls={-0.8}>Unused</Word><Word $w={370} $ls={0}>Materials</Word></Line>
      </Titles>
    </Screen>
  );
}
